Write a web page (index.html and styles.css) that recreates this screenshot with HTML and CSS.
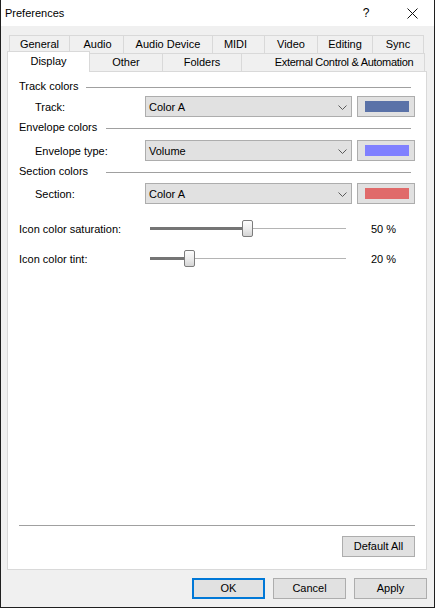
FILE: index.html
```html
<!DOCTYPE html>
<html>
<head>
<meta charset="utf-8">
<title>Preferences</title>
<link rel="stylesheet" href="styles.css">
</head>
<body>
<div class="window">
  <div class="titlebar">
    <span class="title">Preferences</span>
    <span class="tb-help">?</span>
    <span class="tb-close"><svg width="11" height="11" viewBox="0 0 11 11"><path d="M0.5 0.5 L10.5 10.5 M10.5 0.5 L0.5 10.5" stroke="#111" stroke-width="1" fill="none"/></svg></span>
  </div>
  <div class="client">
    <div class="tabs">
      <div class="tabrow back">
        <div class="tab t-general">General</div>
        <div class="tab t-audio">Audio</div>
        <div class="tab t-device">Audio Device</div>
        <div class="tab t-midi">MIDI</div>
        <div class="tab t-video">Video</div>
        <div class="tab t-editing">Editing</div>
        <div class="tab t-sync">Sync</div>
      </div>
      <div class="tabrow front">
        <div class="tab t-display selected">Display</div>
        <div class="tab t-other">Other</div>
        <div class="tab t-folders">Folders</div>
        <div class="tab t-external">External Control &amp; Automation</div>
      </div>
    </div>
    <div class="panel">
      <div class="hdr hdr-track"><span class="hdr-label">Track colors</span><span class="hline"></span></div>
      <div class="row row-1">
        <span class="row-label">Track:</span>
        <div class="combo"><span class="combo-text">Color A</span><svg class="chev" width="9" height="5" viewBox="0 0 9 5"><path d="M0.5 0.5 L4.5 4.5 L8.5 0.5" stroke="#5a5a5a" stroke-width="1" fill="none"/></svg></div>
        <div class="cbtn"><span class="swatch sw-track"></span></div>
      </div>
      <div class="hdr hdr-env"><span class="hdr-label">Envelope colors</span><span class="hline"></span></div>
      <div class="row row-2">
        <span class="row-label">Envelope type:</span>
        <div class="combo"><span class="combo-text">Volume</span><svg class="chev" width="9" height="5" viewBox="0 0 9 5"><path d="M0.5 0.5 L4.5 4.5 L8.5 0.5" stroke="#5a5a5a" stroke-width="1" fill="none"/></svg></div>
        <div class="cbtn"><span class="swatch sw-env"></span></div>
      </div>
      <div class="hdr hdr-sec"><span class="hdr-label">Section colors</span><span class="hline"></span></div>
      <div class="row row-3">
        <span class="row-label">Section:</span>
        <div class="combo"><span class="combo-text">Color A</span><svg class="chev" width="9" height="5" viewBox="0 0 9 5"><path d="M0.5 0.5 L4.5 4.5 L8.5 0.5" stroke="#5a5a5a" stroke-width="1" fill="none"/></svg></div>
        <div class="cbtn"><span class="swatch sw-sec"></span></div>
      </div>
      <div class="srow srow-1">
        <span class="s-label">Icon color saturation:</span>
        <div class="slider">
          <span class="fill" style="width:92px"></span>
          <span class="thumb"></span>
          <span class="rest"></span>
        </div>
        <span class="s-value">50 %</span>
      </div>
      <div class="srow srow-2">
        <span class="s-label">Icon color tint:</span>
        <div class="slider">
          <span class="fill" style="width:34px"></span>
          <span class="thumb"></span>
          <span class="rest"></span>
        </div>
        <span class="s-value">20 %</span>
      </div>
      <div class="panel-bottom">
        <div class="sep"></div>
        <div class="pb-buttons"><button class="btn">Default All</button></div>
      </div>
    </div>
    <div class="footer">
      <button class="btn btn-ok">OK</button>
      <button class="btn">Cancel</button>
      <button class="btn">Apply</button>
    </div>
  </div>
</div>
</body>
</html>
```
FILE: styles.css
```css
* { box-sizing: border-box; }
html, body { margin: 0; padding: 0; background: #ffffff; }
body {
  font-family: "Liberation Sans", Arial, sans-serif;
  font-size: 11px;
  color: #000;
}
.window {
  width: 435px;
  height: 608px;
  border: 1px solid #1f1f1f;
  border-top: none;
  display: flex;
  flex-direction: column;
  background: #f0f0f0;
}
.titlebar {
  height: 26px;
  flex: none;
  background: #ffffff;
  display: flex;
  align-items: center;
  line-height: 26px;
}
.title {
  flex: 1;
  padding-left: 4px;
  font-size: 11px;
}
.tb-help {
  width: 46px;
  text-align: center;
  font-size: 12px;
  padding-left: 2px;
}
.tb-close {
  width: 46px;
  height: 26px;
  display: flex;
  align-items: center;
  justify-content: center;
  padding-left: 2px;
  padding-top: 1px;
}
.client {
  flex: 1;
  display: flex;
  flex-direction: column;
  padding: 9px 7px 8px 6px;
}
.tabs { flex: none; }
.tabrow {
  display: flex;
  height: 18px;
  align-items: flex-end;
}
.tabrow.back { margin-left: 2px; }
.tab {
  height: 18px;
  border: 1px solid #d9d9d9;
  border-bottom: none;
  background: #f0f0f0;
  display: flex;
  align-items: center;
  justify-content: center;
  white-space: nowrap;
  line-height: 14px;
  padding-bottom: 1px;
}
.tab + .tab { margin-left: -1px; }
.t-general { width: 61px; }
.t-audio { width: 55px; padding-left: 2px; }
.t-device { width: 90px; }
.t-midi { width: 53px; padding-right: 6px; }
.t-video { width: 54px; }
.t-editing { width: 56px; }
.t-sync { width: 52px; }
.t-display { width: 83px; }
.t-other { width: 74px; }
.t-folders { width: 80px; }
.t-external { width: 184px; padding-left: 22px; letter-spacing: -0.3px; }
.tab.selected {
  position: relative;
  z-index: 2;
  height: 21px;
  margin-bottom: -1px;
  background: #ffffff;
  padding-bottom: 3px;
}
.panel {
  flex: 1;
  background: #ffffff;
  border: 1px solid #d9d9d9;
  padding: 8px 11px 12px 11px;
  display: flex;
  flex-direction: column;
}
.hdr {
  display: flex;
  align-items: center;
  height: 13px;
  line-height: 13px;
}
.hdr-label { flex: none; width: 87px; white-space: nowrap; }
.hdr-track .hdr-label { width: 67px; }
.hline {
  flex: 1;
  height: 1px;
  background: #a0a0a0;
  margin-right: 4px;
  margin-top: 1px;
}
.hdr-env { margin-top: 4px; }
.hdr-sec { margin-top: 4px; }
.row {
  display: flex;
  align-items: center;
  height: 21px;
  padding-left: 16px;
}
.row-1 { margin-top: 3px; }
.row-2 { margin-top: 6px; }
.row-3 { margin-top: 5px; }
.row-label { width: 110px; flex: none; }
.combo {
  width: 207px;
  height: 21px;
  flex: none;
  background: #e1e1e1;
  border: 1px solid #adadad;
  display: flex;
  align-items: center;
  padding-left: 3px;
  padding-right: 4px;
}
.combo-text { flex: 1; }
.chev { flex: none; margin-top: 1px; }
.cbtn {
  width: 58px;
  height: 21px;
  flex: none;
  margin-left: 5px;
  background: #e1e1e1;
  border: 1px solid #adadad;
  display: flex;
  align-items: center;
  justify-content: center;
  padding-left: 1px;
}
.swatch { width: 44px; height: 11px; display: block; }
.sw-track { background: #5a72a8; }
.sw-env { background: #8080ff; }
.sw-sec { background: #e06a6a; }
.srow {
  display: flex;
  align-items: center;
  height: 18px;
}
.srow-1 { margin-top: 16px; }
.srow-2 { margin-top: 12px; }
.s-label { width: 131px; flex: none; white-space: nowrap; }
.slider {
  width: 196px;
  height: 18px;
  flex: none;
  display: flex;
  align-items: center;
}
.fill {
  flex: none;
  height: 3px;
  background: #757575;
  margin-bottom: 2px;
}
.thumb {
  flex: none;
  width: 11px;
  height: 17px;
  margin-bottom: 1px;
  border: 1px solid #7c7c7c;
  border-radius: 2px;
  background: linear-gradient(to bottom, #fdfdfd 0%, #ededed 50%, #d4d4d4 100%);
}
.rest {
  flex: 1;
  height: 1px;
  background: #b4b4b4;
  margin-bottom: 2px;
}
.s-value { margin-left: 25px; white-space: nowrap; }
.panel-bottom {
  margin-top: auto;
  display: flex;
  flex-direction: column;
}
.sep { height: 1px; background: #a0a0a0; }
.pb-buttons {
  display: flex;
  justify-content: flex-end;
  margin-top: 10px;
}
.btn {
  font-family: "Liberation Sans", Arial, sans-serif;
  font-size: 11px;
  color: #000;
  width: 73px;
  height: 21px;
  background: #e1e1e1;
  border: 1px solid #adadad;
  padding: 0;
  margin: 0;
  line-height: 19px;
}
.pb-buttons .btn { width: 73px; }
.footer {
  flex: none;
  display: flex;
  justify-content: flex-end;
  gap: 8px;
  margin-top: 8px;
}
.btn-ok { border: 2px solid #0078d7; line-height: 17px; }
```
